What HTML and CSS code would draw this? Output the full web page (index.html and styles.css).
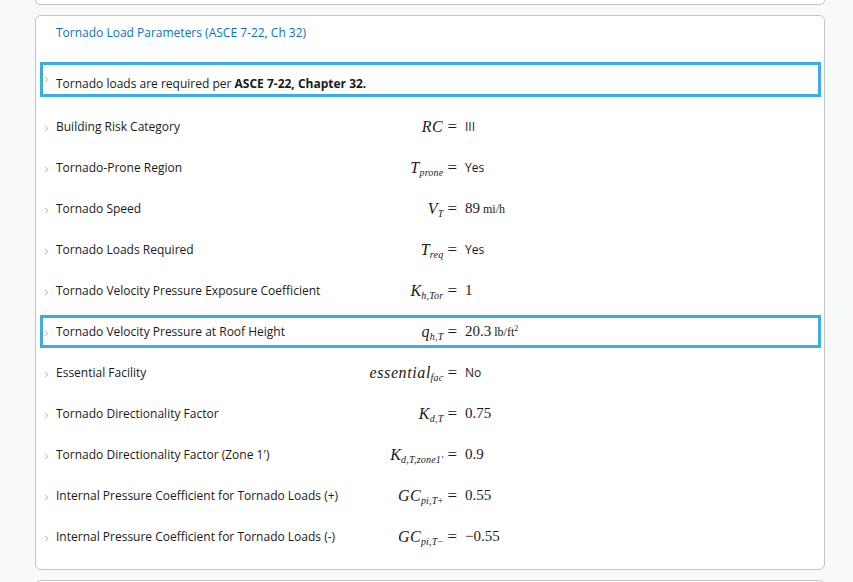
FILE: index.html
```html
<!DOCTYPE html>
<html>
<head>
<meta charset="utf-8">
<link rel="stylesheet" href="styles.css">
</head>
<body>
<div class="page">
  <div class="card prev"></div>
  <div class="card main">
    <div class="title">Tornado Load Parameters (ASCE 7-22, Ch 32)</div>
    <div class="note sel">
      <span class="chev"><svg width="5" height="7" viewBox="0 0 5 7"><path d="M1 1 L4 3.5 L1 6" fill="none" stroke="#b4b4b4" stroke-width="1"/></svg></span>
      <span class="note-text">Tornado loads are required per <b>ASCE 7-22, Chapter 32.</b></span>
    </div>
    <div class="rows">
      <div class="row">
        <span class="chev"><svg width="5" height="7" viewBox="0 0 5 7"><path d="M1 1 L4 3.5 L1 6" fill="none" stroke="#b4b4b4" stroke-width="1"/></svg></span>
        <span class="label">Building Risk Category</span>
        <span class="math"><i>RC</i><span class="eq">=</span></span>
        <span class="val sans">III</span>
      </div>
      <div class="row">
        <span class="chev"><svg width="5" height="7" viewBox="0 0 5 7"><path d="M1 1 L4 3.5 L1 6" fill="none" stroke="#b4b4b4" stroke-width="1"/></svg></span>
        <span class="label">Tornado-Prone Region</span>
        <span class="math"><i>T</i><sub>prone</sub><span class="eq">=</span></span>
        <span class="val sans">Yes</span>
      </div>
      <div class="row">
        <span class="chev"><svg width="5" height="7" viewBox="0 0 5 7"><path d="M1 1 L4 3.5 L1 6" fill="none" stroke="#b4b4b4" stroke-width="1"/></svg></span>
        <span class="label">Tornado Speed</span>
        <span class="math"><i>V</i><sub>T</sub><span class="eq">=</span></span>
        <span class="val num">89<span class="unit">mi/h</span></span>
      </div>
      <div class="row">
        <span class="chev"><svg width="5" height="7" viewBox="0 0 5 7"><path d="M1 1 L4 3.5 L1 6" fill="none" stroke="#b4b4b4" stroke-width="1"/></svg></span>
        <span class="label">Tornado Loads Required</span>
        <span class="math"><i>T</i><sub>req</sub><span class="eq">=</span></span>
        <span class="val sans">Yes</span>
      </div>
      <div class="row">
        <span class="chev"><svg width="5" height="7" viewBox="0 0 5 7"><path d="M1 1 L4 3.5 L1 6" fill="none" stroke="#b4b4b4" stroke-width="1"/></svg></span>
        <span class="label">Tornado Velocity Pressure Exposure Coefficient</span>
        <span class="math"><i>K</i><sub>h,Tor</sub><span class="eq">=</span></span>
        <span class="val num">1</span>
      </div>
      <div class="row sel">
        <span class="chev"><svg width="5" height="7" viewBox="0 0 5 7"><path d="M1 1 L4 3.5 L1 6" fill="none" stroke="#b4b4b4" stroke-width="1"/></svg></span>
        <span class="label">Tornado Velocity Pressure at Roof Height</span>
        <span class="math"><i>q</i><sub>h,T</sub><span class="eq">=</span></span>
        <span class="val num">20.3<span class="unit">lb/ft<sup>2</sup></span></span>
      </div>
      <div class="row">
        <span class="chev"><svg width="5" height="7" viewBox="0 0 5 7"><path d="M1 1 L4 3.5 L1 6" fill="none" stroke="#b4b4b4" stroke-width="1"/></svg></span>
        <span class="label">Essential Facility</span>
        <span class="math"><i>essential</i><sub>fac</sub><span class="eq">=</span></span>
        <span class="val sans">No</span>
      </div>
      <div class="row">
        <span class="chev"><svg width="5" height="7" viewBox="0 0 5 7"><path d="M1 1 L4 3.5 L1 6" fill="none" stroke="#b4b4b4" stroke-width="1"/></svg></span>
        <span class="label">Tornado Directionality Factor</span>
        <span class="math"><i>K</i><sub>d,T</sub><span class="eq">=</span></span>
        <span class="val num">0.75</span>
      </div>
      <div class="row">
        <span class="chev"><svg width="5" height="7" viewBox="0 0 5 7"><path d="M1 1 L4 3.5 L1 6" fill="none" stroke="#b4b4b4" stroke-width="1"/></svg></span>
        <span class="label">Tornado Directionality Factor (Zone 1')</span>
        <span class="math"><i>K</i><sub>d,T,zone1′</sub><span class="eq">=</span></span>
        <span class="val num">0.9</span>
      </div>
      <div class="row">
        <span class="chev"><svg width="5" height="7" viewBox="0 0 5 7"><path d="M1 1 L4 3.5 L1 6" fill="none" stroke="#b4b4b4" stroke-width="1"/></svg></span>
        <span class="label">Internal Pressure Coefficient for Tornado Loads (+)</span>
        <span class="math"><i>GC</i><sub>pi,T<span class="up">+</span></sub><span class="eq">=</span></span>
        <span class="val num">0.55</span>
      </div>
      <div class="row">
        <span class="chev"><svg width="5" height="7" viewBox="0 0 5 7"><path d="M1 1 L4 3.5 L1 6" fill="none" stroke="#b4b4b4" stroke-width="1"/></svg></span>
        <span class="label">Internal Pressure Coefficient for Tornado Loads (-)</span>
        <span class="math"><i>GC</i><sub>pi,T<span class="up">−</span></sub><span class="eq">=</span></span>
        <span class="val num">−0.55</span>
      </div>
    </div>
  </div>
  <div class="card next"></div>
</div>
</body>
</html>
```

FILE: styles.css
```css
* { box-sizing: border-box; }
html, body { margin: 0; padding: 0; }
body {
  background: #f8f9fa;
  font-family: "Open Sans", "Noto Sans", sans-serif;
  font-size: 12px;
  color: #1a1a1a;
  overflow: hidden;
  height: 582px;
}
.page {
  padding: 0 28px 0 35px;
  display: flex;
  flex-direction: column;
  gap: 10px;
}
.card {
  background: #fff;
  border: 1px solid #c4c4c4;
  border-radius: 6px;
}
.prev {
  height: 5px;
  border-top: 0;
  border-radius: 0 0 6px 6px;
}
.main {
  padding: 0 3px 12px 4px;
}
.next {
  height: 20px;
  border-bottom: 0;
  border-radius: 6px 6px 0 0;
}
.title {
  color: #0b72c6;
  font-size: 12px;
  line-height: 18px;
  padding: 8px 0 0 16px;
  height: 46px;
}
.note {
  height: 35px;
  display: flex;
  align-items: flex-start;
  padding: 10px 0 0 1px;
  border: 3px solid #3aaedf;
  margin-bottom: 9px;
}
.note .chev { margin-top: 1px; }
.note-text { line-height: 18px; }
.note-text b { font-weight: 700; }
.chev {
  width: 12px;
  flex: none;
  display: flex;
  align-items: center;
}
.chev svg { display: block; }
.rows { display: flex; flex-direction: column; }
.row {
  height: 33px;
  margin: 4px 0;
  border: 2px solid transparent;
  padding-left: 2px;
  display: grid;
  grid-template-columns: 12px 240px 161px auto;
  align-items: center;
}
.row.sel {
  border: 3px solid #3aaedf;
  padding-left: 1px;
}
.row .chev { padding-top: 3px; }
.label { line-height: 18px; white-space: nowrap; }
.math {
  text-align: right;
  font-family: "Liberation Serif", "DejaVu Serif", serif;
  font-size: 16px;
  white-space: nowrap;
}
.math i { font-style: italic; letter-spacing: 0.6px; }
.math sub {
  font-style: italic;
  font-size: 10px;
  letter-spacing: 0.2px;
  vertical-align: -3px;
  line-height: 0;
  margin-left: -0.4px;
}
.math sub .up { font-style: normal; }
.eq {
  font-style: normal;
  font-size: 17px;
  margin-left: 4px;
}
.val {
  padding-left: 8px;
  white-space: nowrap;
}
.val.sans { font-family: "Open Sans", "Noto Sans", sans-serif; font-size: 12px; }
.val.num { font-family: "Liberation Serif", "DejaVu Serif", serif; font-size: 15px; }
.unit { font-size: 12px; margin-left: 3px; }
.unit sup { font-size: 8px; line-height: 0; vertical-align: 5px; }
```
